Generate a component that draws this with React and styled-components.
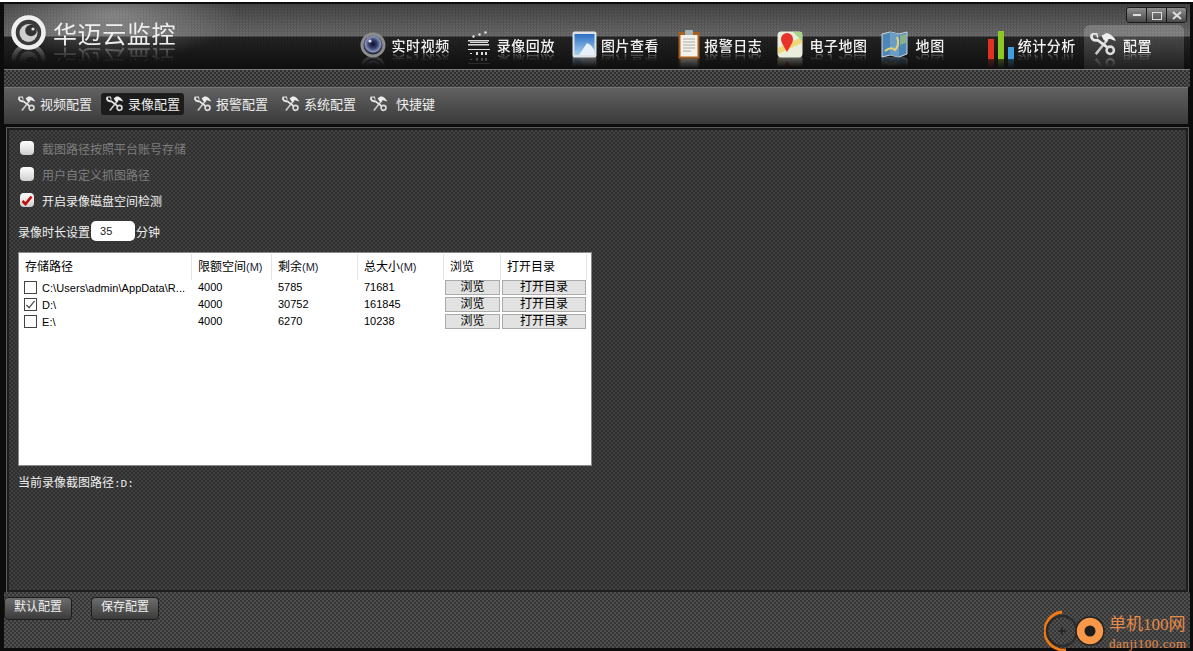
import React from 'react';
import styled, { createGlobalStyle, css } from 'styled-components';

const CJK = `"Liberation Sans", "Noto Sans CJK SC", sans-serif`;
const pattern = (a, b) => css`
  background-color: ${a};
  background-image: repeating-conic-gradient(${a} 0 25%, ${b} 0 50%);
  background-size: 4px 4px;
`;

const GlobalStyle = createGlobalStyle`
  html, body { margin: 0; padding: 0; background: #000; }
  body { font-family: ${CJK}; overflow: hidden; }
`;

const Win = styled.div`
  position: relative;
  width: 1193px;
  height: 651px;
  box-sizing: border-box;
  border-top: 2px solid #fff;
  padding: 2px 3px 3px 4px;
  background: #0c0c0c;
  display: flex;
  flex-direction: column;
  overflow: hidden;
`;

const Header = styled.header`
  height: 65px;
  flex: none;
  display: flex;
  position: relative;
  align-items: flex-end;
  justify-content: space-between;
  border-bottom: 1px solid #7a7a7a;
  background:
    linear-gradient(rgba(0,0,0,.35), transparent 32px, rgba(0,0,0,.66) 33px, rgba(0,0,0,.86) 100%),
    repeating-conic-gradient(#5f5f5f 0 25%, #6c6c6c 0 50%) 0 0 / 3px 3px;
`;

const Glow = styled.div`
  position: absolute;
  left: 0;
  top: 0;
  width: 260px;
  height: 56px;
  background: radial-gradient(ellipse 125px 46px at 42% 18%, rgba(255,255,255,.3), transparent);
`;

const Brand = styled.div`
  position: relative;
  display: flex;
  align-items: center;
  gap: 7px;
  padding-left: 7px;
  margin-bottom: 19px;
  -webkit-box-reflect: below -7px linear-gradient(transparent 45%, rgba(255,255,255,.42));
`;

const BrandName = styled.span`
  font-family: "Noto Sans CJK SC", sans-serif;
  font-size: 24px;
  letter-spacing: .6px;
  line-height: 34px;
  color: #eee;
`;

const Nav = styled.nav`
  position: relative;
  display: flex;
  align-items: flex-end;
  height: 100%;
  padding-right: 6px;
`;

const NavItem = styled.div`
  display: flex;
  align-items: center;
  height: 44px;
  box-sizing: border-box;
  gap: ${(p) => p.$gap || 6}px;
  margin-left: ${(p) => p.$left || 17}px;
  padding: 0 ${(p) => (p.$active ? 32 : 0)}px 5px ${(p) => (p.$active ? 6 : 0)}px;
  border-radius: 6px 6px 0 0;
  background: ${(p) => (p.$active ? 'linear-gradient(rgba(255,255,255,.2), rgba(255,255,255,.07))' : 'none')};
`;

const Reflect = styled.div`
  display: flex;
  align-items: center;
  -webkit-box-reflect: below -3px linear-gradient(transparent 55%, rgba(255,255,255,.4));
`;

const NavLabel = styled.span`
  font-family: "Noto Sans CJK SC", sans-serif;
  font-size: 14px;
  letter-spacing: .55px;
  line-height: 20px;
  font-weight: 500;
  color: #f2f2f2;
  white-space: nowrap;
`;

const WinButtons = styled.div`
  position: absolute;
  top: 3px;
  right: 3px;
  display: flex;
  border: 1px solid #1a1a1a;
  border-radius: 3px;
  overflow: hidden;
`;

const WinButton = styled.div`
  width: 19px;
  height: 14px;
  display: flex;
  align-items: center;
  justify-content: center;
  background: linear-gradient(#8e8e8e, #484848);
  & + & { border-left: 1px solid #1a1a1a; }
`;

const Band = styled.div`
  flex: none;
  height: 17px;
  ${pattern('#505050', '#2f2f2f')}
`;

const SubBar = styled.div`
  flex: none;
  height: 37px;
  box-sizing: border-box;
  display: flex;
  align-items: flex-start;
  padding: 5px 0 0 9px;
  margin-right: 2px;
  border-top: 1px solid #777;
  background: linear-gradient(#616161, #3a3a3a);
`;

const SubTab = styled.div`
  height: 21px;
  display: flex;
  align-items: center;
  gap: ${(p) => p.$gap || 4}px;
  padding: 0 4px 1px 5px;
  margin-right: 5px;
  border-radius: 3px;
  background: ${(p) => (p.$active ? '#1c1c1c' : 'none')};
  color: #eee;
  font-size: 13px;
  white-space: nowrap;
`;

const Panel = styled.main`
  flex: none;
  height: 464px;
  margin: 4px 2px 0 3px;
  box-sizing: border-box;
  padding: 5px 9px 0;
  border: 2px solid #1e1e1e;
  outline: 1px solid #5a5a5a;
  color: #eee;
  font-size: 12px;
  ${pattern('#3e3e3e', '#303030')}
`;

const CheckRow = styled.label`
  height: 26px;
  display: flex;
  align-items: center;
  gap: 8px;
  padding-left: 2px;
  color: ${(p) => (p.$off ? '#7d7d7d' : '#eee')};
`;

const RoundCheck = styled.span`
  width: 14px;
  height: 14px;
  border-radius: 4px;
  background: linear-gradient(#fff, #cfcfcf);
  display: flex;
  align-items: center;
  justify-content: center;
`;

const DurationRow = styled.div`
  display: flex;
  align-items: center;
  height: 20px;
  margin: 8px 0 11px;
  gap: 1px;
`;

const Num = styled.span`
  width: 44px;
  height: 20px;
  box-sizing: border-box;
  padding: 4px 0 0 9px;
  background: #fff;
  border-radius: 5px;
  color: #222;
  font-size: 11px;
`;

const Table = styled.div`
  width: 574px;
  height: 214px;
  box-sizing: border-box;
  background: #fff;
  border: 1px solid #8a8a8a;
  padding: 1px 0 0;
  color: #000;
  font-size: 11px;
`;

const columns = '173px 80px 86px 86px 57px 86px';

const HeadRow = styled.div`
  display: grid;
  grid-template-columns: ${columns};
  height: 25px;
  margin-bottom: 0;
`;

const HeadCell = styled.div`
  border-right: 1px solid #e4e4e4;
  padding: 1px 0 0 6px;
  line-height: 25px;
  font-size: 12px;
  white-space: nowrap;
  & small { font-size: 11px; color: #223; }
`;

const Row = styled.div`
  display: grid;
  grid-template-columns: ${columns};
  height: 17px;
  align-items: center;
`;

const Cell = styled.div`
  padding-left: 6px;
  line-height: 15px;
  white-space: nowrap;
`;

const PathCell = styled.div`
  display: flex;
  align-items: center;
  gap: 5px;
  padding-left: 5px;
  letter-spacing: .05px;
  white-space: nowrap;
`;

const Box = styled.span`
  flex: none;
  width: 11px;
  height: 11px;
  border: 1px solid #444;
  background: #fff;
  display: flex;
  align-items: center;
  justify-content: center;
`;

const GreyBtn = styled.div`
  margin-left: 1px;
  height: 13px;
  width: ${(p) => p.$w}px;
  border: 1px solid #aaa;
  background: #e2e2e2;
  text-align: center;
  font-size: 12px;
  line-height: 13px;
`;

const PathText = styled.div`
  margin-top: 9px;
  line-height: 16px;
  & code { font-family: "Liberation Mono", monospace; font-size: 11px; }
`;

const Footer = styled.footer`
  flex: 1;
  display: flex;
  align-items: flex-start;
  gap: 19px;
  padding-top: 5px;
  ${pattern('#505050', '#353535')}
`;

const FootBtn = styled.div`
  width: 66px;
  height: 21px;
  border: 1px solid #1c1c1c;
  border-radius: 4px;
  background: linear-gradient(#6d6d6d, #3b3b3b);
  color: #eee;
  font-size: 12px;
  line-height: 19px;
  text-align: center;
`;

const Watermark = styled.div`
  position: absolute;
  left: 1044px;
  top: 607px;
  display: flex;
  align-items: center;
  gap: 3px;
  color: #e68a48;
  font-family: "Liberation Serif", "Noto Sans CJK SC", serif;
`;

const MarkText = styled.div`
  display: flex;
  flex-direction: column;
  margin-top: 3px;
`;

const MarkBig = styled.span`
  font-size: 17px;
  line-height: 22px;
`;

const MarkSmall = styled.span`
  font-size: 13px;
  line-height: 15px;
  letter-spacing: .55px;
`;

const Logo = () => (
  <svg width="35" height="35" viewBox="0 0 35 35">
    <circle cx="17.5" cy="17.5" r="15" fill="#3a3a3a" stroke="#f0f0f0" strokeWidth="4.5" />
    <circle cx="17.5" cy="18" r="9" fill="#cfcfcf" />
    <circle cx="20" cy="15.5" r="5.8" fill="#333" />
    <circle cx="22" cy="14" r="1.6" fill="#e4e4e4" />
  </svg>
);

const Tools = ({ size = 18 }) => (
  <svg width={size} height={size} viewBox="0 0 28 28" fill="none">
    <path d="M6 24 L18 9" stroke="#c8c8c8" strokeWidth="2.6" />
    <path d="M12 5 L17 2 Q23 3 27 10 L24 9.5 Q21 7.5 19 8.5 L17 11.5 L14 9 Z" fill="#ededed" />
    <path d="M2 3 L1.5 6.5 Q3 10.5 8 9.5 L18 17" stroke="#e6e6e6" strokeWidth="2.8" />
    <path d="M2 3 L7 3 L8 7" stroke="#e6e6e6" strokeWidth="1.6" />
    <circle cx="21" cy="20" r="3.8" stroke="#dcdcdc" strokeWidth="2.6" />
  </svg>
);

const Lens = () => (
  <svg width="26" height="26" viewBox="0 0 26 26">
    <defs>
      <radialGradient id="lens" cx="50%" cy="45%" r="50%">
        <stop offset="0" stopColor="#111122" />
        <stop offset=".45" stopColor="#34406f" />
        <stop offset=".8" stopColor="#8a93b8" />
        <stop offset="1" stopColor="#20243a" />
      </radialGradient>
    </defs>
    <circle cx="13" cy="13" r="12.5" fill="#8c8c8c" />
    <circle cx="13" cy="13" r="9.5" fill="url(#lens)" />
    <circle cx="10" cy="9" r="1.6" fill="#dfe4ff" />
  </svg>
);

const Clapper = () => (
  <svg width="24" height="27" viewBox="0 0 24 27">
    <g fill="#ddd">
      <path d="M5 5l2-1 1 2-2 1zM11 3l2-1 1 2-2 1zM17 1l2-1 1 2-2 1z" />
      <path d="M1 9h21v1.5H1zM1 13h21v1.5H1zM3 11h18v1H3zM1 18h22v1H1z" />
      <path d="M3 22h2v1H3zM9 21h2v3H9zM14 21h2v3h-2zM18 21h2v3h-2z" />
    </g>
  </svg>
);

const Picture = () => (
  <svg width="25" height="27" viewBox="0 0 25 27">
    <defs>
      <linearGradient id="sky" x1="0" y1="0" x2="0" y2="1">
        <stop offset="0" stopColor="#2a6fc4" />
        <stop offset="1" stopColor="#a9d0ef" />
      </linearGradient>
    </defs>
    <rect x=".5" y=".5" width="24" height="26" rx="2" fill="#dfe3e8" />
    <rect x="2.5" y="3" width="20" height="21" fill="url(#sky)" />
    <path d="M7 24 L15 12 Q20 14 22.5 20 V24 Z" fill="#e8f1fa" />
  </svg>
);

const Clip = () => (
  <svg width="22" height="29" viewBox="0 0 22 29">
    <rect x=".5" y="2" width="21" height="26.5" rx="1" fill="#a9601e" />
    <rect x="2.5" y="5" width="17" height="21.5" fill="#f4f2ea" />
    <path d="M5 9h12M5 12h12M5 15h12M5 18h12M5 21h8" stroke="#aaa" strokeWidth="1" />
    <rect x="7" y="0" width="8" height="5" rx="1" fill="#9fb3b8" />
  </svg>
);

const Pin = () => (
  <svg width="26" height="27" viewBox="0 0 26 27">
    <rect x=".5" y=".5" width="25" height="26" rx="4" fill="#e9eddc" />
    <path d="M1 17 L25 6 V12 L1 23 Z" fill="#f2d77a" />
    <path d="M16 1 L25 1 V10 Z" fill="#a7d38a" />
    <path d="M10 21 C6 14 4 11 4 8 A6 6 0 0 1 16 8 C16 11 14 14 10 21 Z" fill="#e8322c" />
  </svg>
);

const MapIcon = () => (
  <svg width="27" height="27" viewBox="0 0 27 27">
    <path d="M1 3 L9 1 L18 3 L26 1 V23 L18 26 L9 24 L1 26 Z" fill="#4f86b8" stroke="#cfd8df" />
    <path d="M9 1 V24 L18 26 V3 Z" fill="#6b9ec4" />
    <path d="M4 20 Q10 15 14 19 Q19 14 16 6" stroke="#e8cf72" strokeWidth="2" fill="none" />
    <path d="M19 4 L25 3 V12 L19 14 Z" fill="#86b28a" />
  </svg>
);

const Bars = () => (
  <svg width="26" height="28" viewBox="0 0 26 28">
    <rect x="0" y="8" width="6" height="20" fill="#e0301e" />
    <rect x="10" y="0" width="6" height="28" fill="#8cc822" />
    <rect x="20" y="16" width="6" height="12" fill="#3f9fe0" />
  </svg>
);

const Check = ({ color, w = 2.6 }) => (
  <svg width="12" height="11" viewBox="0 0 12 11" fill="none">
    <path d="M1.5 6 L4.5 9 L10.5 1.5" stroke={color} strokeWidth={w} />
  </svg>
);

const Circles = () => (
  <svg width="62" height="44" viewBox="0 0 62 44" fill="none">
    <path d="M18 3 A19 19 0 0 0 22 41" stroke="#f07a13" strokeWidth="3" />
    <circle cx="18" cy="22" r="15" stroke="#2b2b2b" strokeWidth="2.5" />
    <path d="M14 22h8M18 18v8" stroke="#222" strokeWidth="1.3" />
    <circle cx="46" cy="22" r="14" fill="#f89848" stroke="#222" strokeWidth="1.5" />
    <circle cx="46" cy="22" r="5.5" fill="#1d1d1d" />
  </svg>
);

const navItems = [
  { icon: <Lens />, label: '实时视频' },
  { icon: <Clapper />, label: '录像回放' },
  { icon: <Picture />, label: '图片查看', gap: 4 },
  { icon: <Clip />, label: '报警日志', gap: 4, left: 19 },
  { icon: <Pin />, label: '电子地图', left: 15 },
  { icon: <MapIcon />, label: '地图', gap: 8, left: 13 },
  { icon: <Bars />, label: '统计分析', gap: 4, left: 43 }
];

const subTabs = [
  { label: '视频配置' },
  { label: '录像配置', active: true },
  { label: '报警配置' },
  { label: '系统配置' },
  { label: '快捷键', gap: 8 }
];

const rows = [
  { path: 'C:\\Users\\admin\\AppData\\R...', limit: 4000, left: 5785, total: 71681 },
  { path: 'D:\\', limit: 4000, left: 30752, total: 161845, checked: true },
  { path: 'E:\\', limit: 4000, left: 6270, total: 10238 }
];

const App = () => (
  <>
    <GlobalStyle />
    <Win>
      <Header>
        <Glow />
        <Brand>
          <Logo />
          <BrandName>华迈云监控</BrandName>
        </Brand>
        <Nav>
          {navItems.map((n) => (
            <NavItem key={n.label} $left={n.left} $gap={n.gap}>
              <Reflect>{n.icon}</Reflect>
              <Reflect><NavLabel>{n.label}</NavLabel></Reflect>
            </NavItem>
          ))}
          <NavItem $active $left={8}>
            <Reflect><Tools size={27} /></Reflect>
            <Reflect><NavLabel>配置</NavLabel></Reflect>
          </NavItem>
        </Nav>
        <WinButtons>
          <WinButton>
            <svg width="10" height="8" viewBox="0 0 10 8"><path d="M1 4h8" stroke="#ddd" strokeWidth="2" /></svg>
          </WinButton>
          <WinButton>
            <svg width="10" height="9" viewBox="0 0 10 9"><rect x=".5" y="1.5" width="9" height="7" fill="none" stroke="#ddd" /></svg>
          </WinButton>
          <WinButton>
            <svg width="10" height="9" viewBox="0 0 10 9"><path d="M1 1l8 7M9 1l-8 7" stroke="#ddd" strokeWidth="2" /></svg>
          </WinButton>
        </WinButtons>
      </Header>
      <Band />
      <SubBar>
        {subTabs.map((t) => (
          <SubTab key={t.label} $active={t.active} $gap={t.gap}>
            <Tools />
            {t.label}
          </SubTab>
        ))}
      </SubBar>
      <Panel>
        <CheckRow $off><RoundCheck />截图路径按照平台账号存储</CheckRow>
        <CheckRow $off><RoundCheck />用户自定义抓图路径</CheckRow>
        <CheckRow>
          <RoundCheck><Check color="#c00d0d" /></RoundCheck>
          开启录像磁盘空间检测
        </CheckRow>
        <DurationRow>
          录像时长设置
          <Num>35</Num>
          分钟
        </DurationRow>
        <Table>
          <HeadRow>
            <HeadCell>存储路径</HeadCell>
            <HeadCell>限额空间<small>(M)</small></HeadCell>
            <HeadCell>剩余<small>(M)</small></HeadCell>
            <HeadCell>总大小<small>(M)</small></HeadCell>
            <HeadCell>浏览</HeadCell>
            <HeadCell>打开目录</HeadCell>
          </HeadRow>
          {rows.map((r) => (
            <Row key={r.path}>
              <PathCell>
                <Box>{r.checked && <Check color="#555" w={1.5} />}</Box>
                {r.path}
              </PathCell>
              <Cell>{r.limit}</Cell>
              <Cell>{r.left}</Cell>
              <Cell>{r.total}</Cell>
              <GreyBtn $w={53}>浏览</GreyBtn>
              <GreyBtn $w={82}>打开目录</GreyBtn>
            </Row>
          ))}
        </Table>
        <PathText>当前录像截图路径<code>:D:</code></PathText>
      </Panel>
      <Footer>
        <FootBtn>默认配置</FootBtn>
        <FootBtn>保存配置</FootBtn>
      </Footer>
      <Watermark>
        <Circles />
        <MarkText>
          <MarkBig>单机100网</MarkBig>
          <MarkSmall>danji100.com</MarkSmall>
        </MarkText>
      </Watermark>
    </Win>
  </>
);

export default App;
